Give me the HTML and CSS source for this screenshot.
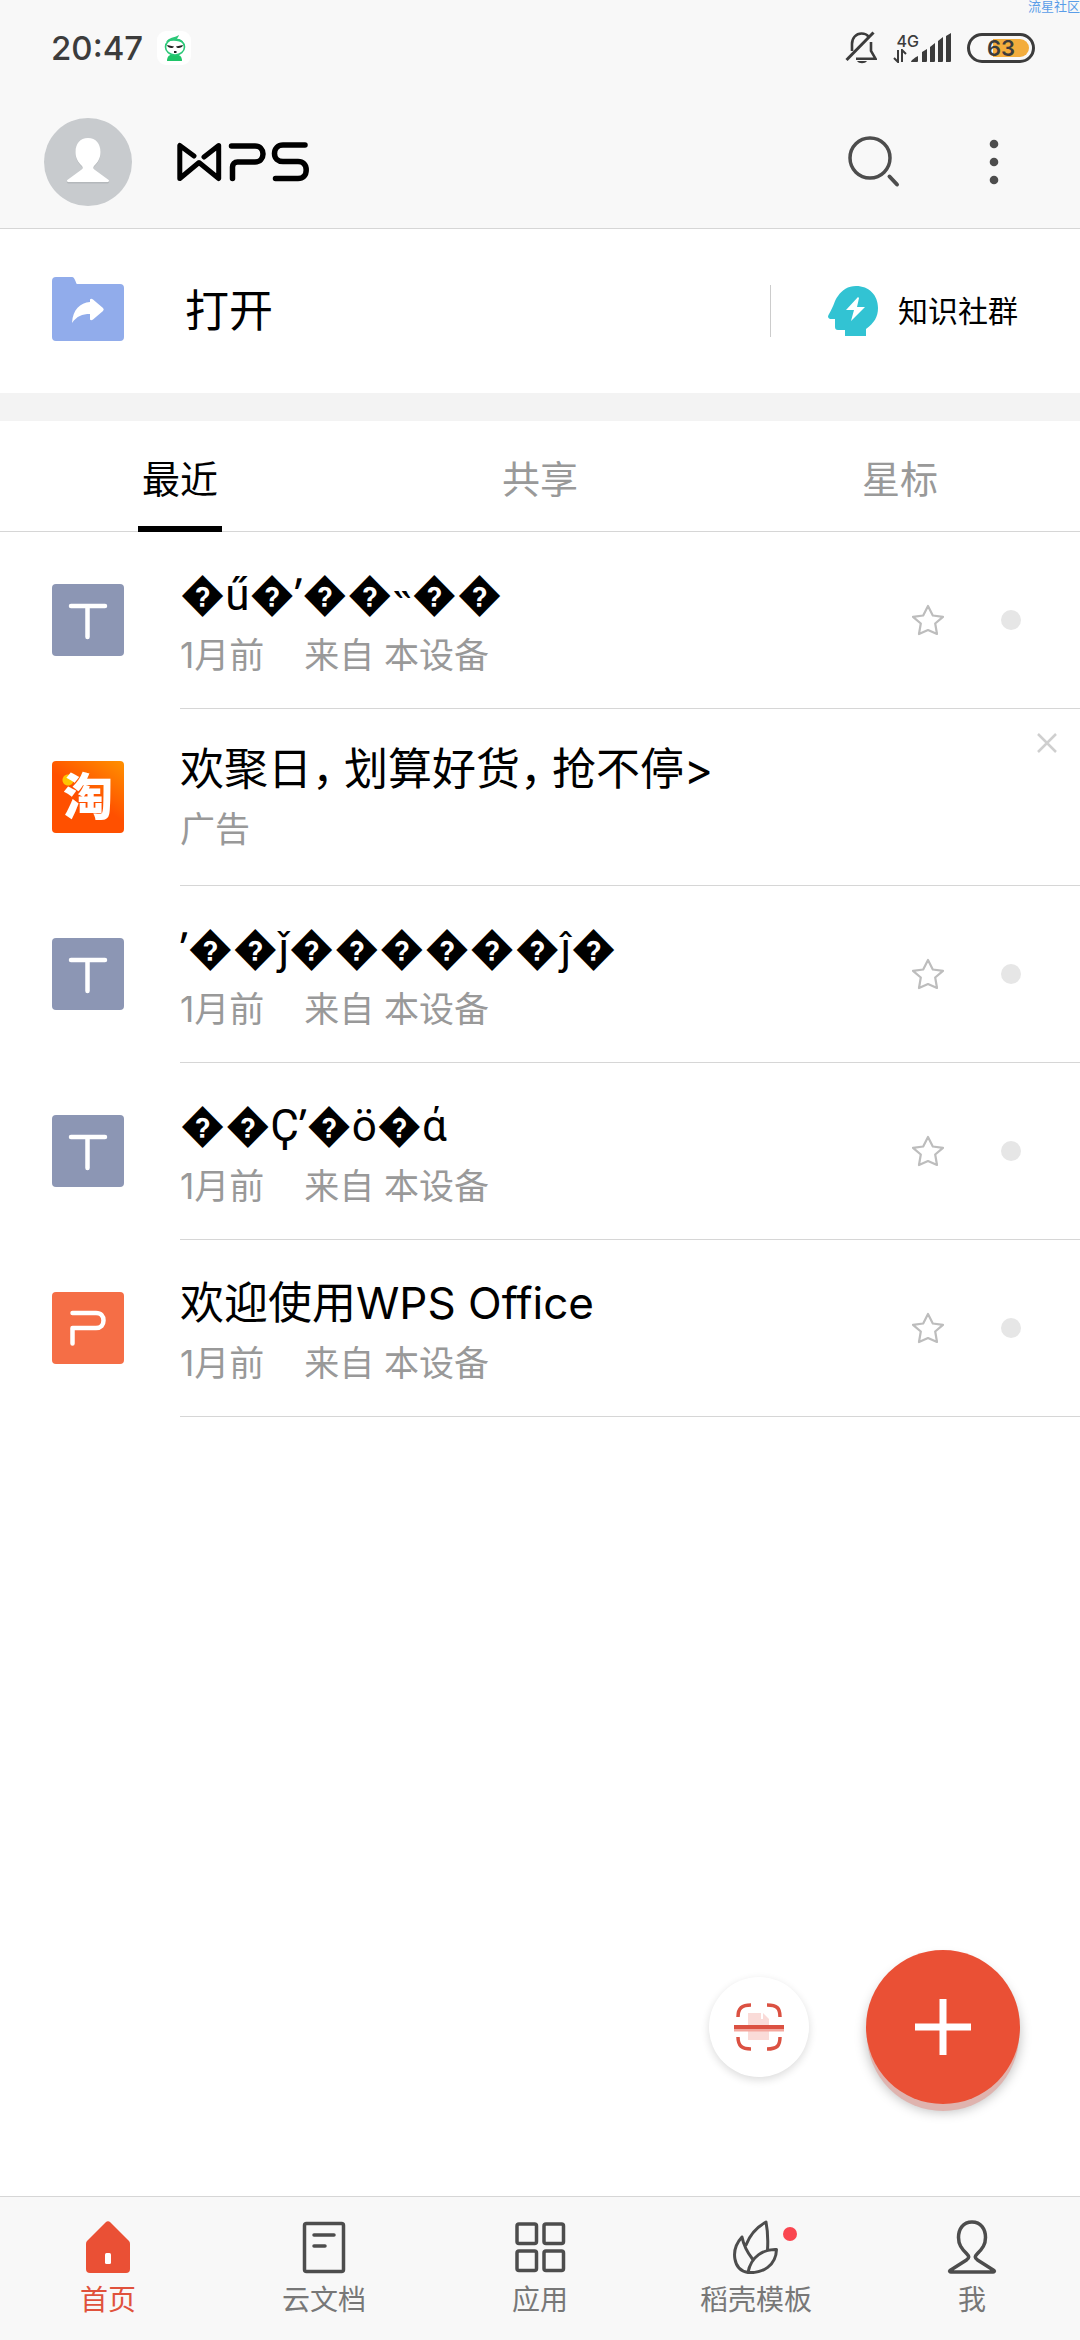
FILE: index.html
```html
<!DOCTYPE html>
<html lang="zh-CN">
<head>
<meta charset="utf-8">
<meta name="viewport" content="width=device-width, initial-scale=1">
<title>WPS Office</title>
<link rel="stylesheet" href="styles.css">
</head>
<body>
<div class="app">
  <div class="status">
    <span class="time">20:47</span>
    <svg class="notice" width="34" height="34" viewBox="0 0 34 34">
      <rect width="34" height="34" rx="9" fill="#fff"/>
      <path d="M10 30c0-4 2-6 4-6h7c2 0 4 2 4 6z" fill="#1fc468"/>
      <ellipse cx="18" cy="16" rx="9.5" ry="8" fill="#fff" stroke="#2bc878" stroke-width="1.6"/>
      <path d="M9 11c3-5 8-4 13-7-1 3-2 3-2 4 4 0 6 2 7 5-5-4-12-4-18-2z" fill="#2bc878"/>
      <path d="M10 14l7 1.500c0 2-6 2.500-7-1.500zM26 14l-7 1.500c0 2 6 2.500 7-1.500zM17 20h2.500v2H17z" fill="#222"/>
    </svg>
    <div class="status-right">
      <svg width="32" height="34" viewBox="0 0 32 34" fill="none" stroke="#3c3c3c" stroke-width="2.600">
        <path d="M7 20v-7c0-6 4-10.500 9.500-10.500 3 0 5.500 1 7 3M26 11v9l4.500 7.700H11"/>
        <path d="M1.500 29L28.500 1.500" stroke-width="3"/>
        <path d="M12 30h10c-2 3-8 3-10 0z" fill="#3c3c3c" stroke="none"/>
      </svg>
      <div class="network">
        <div class="carrier">
          <span>4G</span>
          <svg width="14" height="14" viewBox="0 0 14 14" fill="none" stroke="#3c3c3c" stroke-width="2"><path d="M5 1v12L1 9M9 13V1l4 4"/></svg>
        </div>
        <svg width="40" height="30" viewBox="0 0 40 30" fill="#3c3c3c"><path d="M0 29c0-2 5-5 7-6v5q0 1-1 1zM11 19l5-3v12q0 1-1 1h-4zM19 14l5-4v18q0 1-1 1h-4zM27 8l5-4v24q0 1-1 1h-4zM35 3l5-3v28q0 1-1 1h-4z"/></svg>
      </div>
      <span class="battery"><span class="charge"></span><span class="percent">63</span></span>
    </div>
    <span class="watermark">流星社区</span>
  </div>

  <header class="header">
    <button class="avatar" aria-label="账户">
      <svg width="88" height="88" viewBox="0 0 88 88"><circle cx="44" cy="44" r="44" fill="#c8cbce"/>
      <path d="M44 20c-8 0-12.500 6-12.500 14 0 6 2.500 10 6.500 14 1.500 2 .5 3-1 4L24 61.500c-2 1.500-1 3 1 3h38c2 0 3-1.500 1-3L51 52c-1.500-1-2.500-2-1-4 4-4 6.500-8 6.500-14 0-8-4.500-14-12.500-14z" fill="#b4b8bb" transform="translate(0 1)"/>
      <path d="M44 20c-8 0-12.500 6-12.500 14 0 6 2.500 10 6.500 14 1.500 2 .5 3-1 4L24 61.500c-2 1.500-1 2.500 1 2.500h38c2 0 3-1 1-2.500L51 52c-1.500-1-2.500-2-1-4 4-4 6.500-8 6.500-14 0-8-4.500-14-12.500-14z" fill="#fff"/></svg>
    </button>
    <svg class="logo" role="img" aria-label="WPS" width="132" height="40" viewBox="0 0 132 40" fill="none" stroke="#000" stroke-width="5.500" stroke-linecap="round" stroke-linejoin="round">
      <path d="M17 14L2.800 3.500v33L22 20.500l19.700 16v-33L27 15" stroke-width="5"/>
      <path d="M54.500 4H78c5 0 8 3.500 8 8s-3 8-8 8H60.500c-3 0-5 2-5 5v11.500"/>
      <path d="M128 3H106c-5 0-8.500 3.500-8.500 8.500s3.500 8 8.500 8h15c5 0 8.200 3 8.200 8.500s-3.200 8.500-8.200 8.500H98.500"/>
    </svg>
    <div class="header-actions">
      <button aria-label="搜索">
        <svg width="56" height="56" viewBox="0 0 56 56" fill="none" stroke="#4d4d4d" stroke-width="3.500"><circle cx="24" cy="24" r="20"/><path d="M43.500 42.500l7.500 8" stroke-width="4" stroke-linecap="round"/></svg>
      </button>
      <button aria-label="更多">
        <svg width="56" height="56" viewBox="0 0 56 56" fill="#4d4d4d"><circle cx="28" cy="10" r="4.300"/><circle cx="28" cy="28" r="4.300"/><circle cx="28" cy="46" r="4.300"/></svg>
      </button>
    </div>
  </header>

  <section class="open">
    <button class="open-file">
      <svg width="72" height="68" viewBox="0 0 72 68"><path d="M4 0h16c3 0 4 7 5 7h43q4 0 4 4v49q0 4-4 4H4q-4 0-4-4V4q0-4 4-4z" fill="#91aceb"/><path d="M20 46c1-14 8-20 18-21v-2.500q1-1.500 3 0L51 31q1.500 1.500 0 3L41 42.500q-2 1.500-3 0V37c-8 0-13 2-18 9z" fill="#fff"/></svg>
      打开
    </button>
    <a class="community" href="#community">
      <svg width="50" height="50" viewBox="0 0 50 50"><path d="M28 0c13 0 22 9 22 22 0 9-4 15-12 21v7H17v-6H10q-3 0-3-3v-8H2q-3-1-1.500-4C7 18 6 15 10 10 14 4 20 0 28 0z" fill="#32c3d3"/><path d="M30 11L18 24h8l-3 11 14-14h-8l2-9z" fill="#fff"/></svg>
      知识社群
    </a>
  </section>

  <nav class="tabs">
    <a class="active" href="#recent">最近</a>
    <a href="#shared">共享</a>
    <a href="#starred">星标</a>
  </nav>

  <svg width="0" height="0" class="defs" aria-hidden="true">
    <symbol id="star" viewBox="0 0 32 32"><path d="M16 2l4.800 9.500 10.200 1.300-7.800 6.700 1.800 10.500L16 26l-9 4 1.800-10.500L1 12.800l10.200-1.300z" fill="none" stroke="#bdbdbd" stroke-width="2.200" stroke-linejoin="round"/></symbol>
    <symbol id="text-file" viewBox="0 0 72 72"><rect width="72" height="72" rx="4" fill="#8c96b4"/><path d="M19 22h34M35.500 22v31" fill="none" stroke="#fff" stroke-width="4.500" stroke-linecap="round"/></symbol>
  </svg>

  <main class="files">
    <article class="file">
      <svg class="tile"><use href="#text-file"/></svg>
      <div class="body">
        <div class="text">
          <h2 class="title garbled">&#xFFFD;ű&#xFFFD;ʹ&#xFFFD;&#xFFFD;˵&#xFFFD;&#xFFFD;</h2>
          <p class="meta"><span>1月前</span><span>来自 本设备</span></p>
        </div>
        <button class="star" aria-label="星标"><svg width="32" height="32"><use href="#star"/></svg></button>
        <span class="dot"></span>
      </div>
    </article>
    <article class="file ad">
      <div class="tile taobao"><span>淘</span></div>
      <div class="body">
        <div class="text">
          <h2 class="title">欢聚日<span class="comma">，</span>划算好货<span class="comma">，</span>抢不停&gt;</h2>
          <p class="meta">广告</p>
        </div>
        <button class="close" aria-label="关闭"><svg width="20" height="20" viewBox="0 0 20 20"><path d="M1 1l18 18M19 1L1 19" stroke="#cfcfcf" stroke-width="2.500"/></svg></button>
      </div>
    </article>
    <article class="file">
      <svg class="tile"><use href="#text-file"/></svg>
      <div class="body">
        <div class="text">
          <h2 class="title garbled">ʹ&#xFFFD;&#xFFFD;ǰ&#xFFFD;&#xFFFD;&#xFFFD;&#xFFFD;&#xFFFD;&#xFFFD;ĵ&#xFFFD;</h2>
          <p class="meta"><span>1月前</span><span>来自 本设备</span></p>
        </div>
        <button class="star" aria-label="星标"><svg width="32" height="32"><use href="#star"/></svg></button>
        <span class="dot"></span>
      </div>
    </article>
    <article class="file">
      <svg class="tile"><use href="#text-file"/></svg>
      <div class="body">
        <div class="text">
          <h2 class="title garbled">&#xFFFD;&#xFFFD;Ҫʹ&#xFFFD;ö&#xFFFD;ά</h2>
          <p class="meta"><span>1月前</span><span>来自 本设备</span></p>
        </div>
        <button class="star" aria-label="星标"><svg width="32" height="32"><use href="#star"/></svg></button>
        <span class="dot"></span>
      </div>
    </article>
    <article class="file">
      <svg class="tile" viewBox="0 0 72 72"><rect width="72" height="72" rx="4" fill="#f56e46"/><path d="M20.500 21H44c5 0 7.500 3 7.500 7.500S49 36 44 36H20.500v15.500" fill="none" stroke="#fff" stroke-width="4.500" stroke-linecap="round" stroke-linejoin="round"/></svg>
      <div class="body">
        <div class="text">
          <h2 class="title">欢迎使用WPS Office</h2>
          <p class="meta"><span>1月前</span><span>来自 本设备</span></p>
        </div>
        <button class="star" aria-label="星标"><svg width="32" height="32"><use href="#star"/></svg></button>
        <span class="dot"></span>
      </div>
    </article>
  </main>

  <div class="bottom">
    <div class="floating">
      <button class="scan" aria-label="扫描">
        <svg width="52" height="50" viewBox="0 0 52 50" fill="none" stroke="#db5142" stroke-width="4">
          <path d="M15 11h13v6h8v21H15z" fill="#fadbd8" stroke="none"/><path d="M30 11l6 6h-6z" fill="#fadbd8" stroke="none"/>
          <path d="M1 27h50" stroke="#f4a79e" stroke-width="5"/>
          <path d="M1 25h50"/><path d="M5 15c0-9 4-12 13-12M34 3c10 0 13 3 13 12M5 35c0 9 4 12 13 12M34 47c10 0 13-3 13-12" stroke-width="3.500"/>
        </svg>
      </button>
      <button class="create" aria-label="新建">
        <svg width="58" height="58" viewBox="0 0 58 58"><path d="M1 29h56M29 1v56" stroke="#fff" stroke-width="7"/></svg>
      </button>
    </div>
    <nav class="navbar">
      <a class="active" href="#home">
        <svg width="52" height="54" viewBox="0 0 52 54"><path d="M23.500 2.500q2.500-2.500 5 0L47 21q1 1 1 3v25q0 4-4 4H8q-4 0-4-4V24q0-2 1-3z" fill="#ea5035"/><rect x="23" y="33" width="6" height="11" rx="1.500" fill="#fff"/></svg>
        首页
      </a>
      <a href="#cloud">
        <svg width="52" height="54" viewBox="0 0 52 54" fill="none" stroke="#4d4d4d" stroke-width="3.500"><rect x="6.500" y="3.500" width="39" height="48" rx="2"/><path d="M16 15h20M16 26h11" stroke-linecap="round"/></svg>
        云文档
      </a>
      <a href="#apps">
        <svg width="52" height="54" viewBox="0 0 52 54" fill="none" stroke="#4d4d4d" stroke-width="3.500"><rect x="3" y="4" width="19.500" height="19.500" rx="2"/><rect x="30" y="4" width="19.500" height="19.500" rx="2"/><rect x="3" y="31" width="19.500" height="19.500" rx="2"/><rect x="30" y="31" width="19.500" height="19.500" rx="2"/></svg>
        应用
      </a>
      <a href="#templates">
        <span class="badged">
          <svg width="52" height="54" viewBox="0 0 52 54" fill="none" stroke="#4d4d4d" stroke-width="3" stroke-linejoin="round" stroke-linecap="round"><path d="M16 25C19 17 25 8 36 2c2 10 2 20 1.500 28M22.500 39C17 32 14 27 12 17 0 30 3 50 18 52.500c15 1 28-7 28.500-23C34 29 21 36 18 52.500"/></svg>
          <span class="badge"></span>
        </span>
        稻壳模板
      </a>
      <a href="#me">
        <svg width="52" height="54" viewBox="0 0 52 54" fill="none" stroke="#4d4d4d" stroke-width="3.500" stroke-linejoin="round"><path d="M26 2C17 2 12.500 9 12.500 17.500c0 7 3 11 8 16 3 3 3 4 0 6.500L4 50.500c-1 1 0 1.500 1 1.500h42c1 0 2-.5 1-1.500L31.500 40c-3-2.500-3-3.500 0-6.500 5-5 8-9 8-16C39.500 9 35 2 26 2z"/></svg>
        我
      </a>
    </nav>
  </div>
</div>
</body>
</html>
```
FILE: styles.css
```css
* { box-sizing: border-box; }

body {
  margin: 0;
  background: #fff;
  color: #000;
  font-family: Inter, "Noto Sans CJK SC", sans-serif;
}

h2, p { margin: 0; font-weight: 400; }
a { color: inherit; text-decoration: none; }
svg { display: block; flex: none; }
button {
  padding: 0;
  border: 0;
  background: none;
  color: inherit;
  font: inherit;
}

.app {
  position: relative;
  display: flex;
  flex-direction: column;
  min-height: 100vh;
}

/* status bar */
.status {
  position: relative;
  display: flex;
  align-items: center;
  height: 96px;
  padding: 0 45px 0 51px;
  background: #f8f8f8;
  color: #3c3c3c;
}
.time { font-size: 33px; font-weight: 500; line-height: 40px; }
.notice { margin-left: 14px; }
.status-right {
  display: flex;
  align-items: center;
  gap: 16px;
  margin-left: auto;
}
.network { display: flex; align-items: flex-end; }
.network > svg { margin-left: -8px; }
.carrier { font-size: 16px; font-weight: 500; line-height: 16px; }
.carrier span { padding-left: 4px; }
.battery {
  position: relative;
  display: grid;
  place-items: center;
  width: 68px;
  height: 30px;
  border: 3px solid #3c3c3c;
  border-radius: 15px;
}
.charge {
  position: absolute;
  top: 3px;
  right: 3px;
  bottom: 3px;
  width: 36px;
  border-radius: 0 9px 9px 0;
  background: #f3ad3d;
}
.percent {
  position: relative;
  font-size: 22px;
  font-weight: 600;
  line-height: 24px;
}
.watermark {
  position: absolute;
  top: -2px;
  right: 0;
  color: #5a9de8;
  font-size: 13px;
  line-height: 16px;
  white-space: nowrap;
}

/* title bar */
.header {
  display: flex;
  align-items: center;
  height: 133px;
  padding: 0 58px 0 44px;
  border-bottom: 1px solid #d6d6d6;
  background: #f8f8f8;
}
.logo { margin-left: 45px; }
.header-actions { display: flex; gap: 64px; margin-left: auto; }

/* open row */
.open {
  display: flex;
  align-items: center;
  justify-content: space-between;
  height: 192px;
  padding-left: 52px;
  border-bottom: 28px solid #f3f3f3;
}
.open-file {
  display: flex;
  align-items: center;
  gap: 61px;
  font-size: 44px;
  line-height: 64px;
}
.community {
  display: flex;
  align-items: center;
  gap: 20px;
  padding: 0 62px 0 57px;
  border-left: 1px solid #ccc;
  font-size: 30px;
  line-height: 52px;
}

/* tabs */
.tabs {
  display: grid;
  grid-template-columns: repeat(3, 1fr);
  justify-items: center;
  height: 111px;
  border-bottom: 1px solid #d6d6d6;
  color: #999;
  font-size: 38px;
  line-height: 116px;
}
.tabs a { height: 111px; padding: 0 4px; }
.tabs .active { border-bottom: 6px solid #000; color: #000; }

/* file list */
.defs { position: absolute; }
.file {
  display: flex;
  gap: 56px;
  height: 177px;
  padding-left: 52px;
}
.tile { flex: none; width: 72px; height: 72px; margin-top: 52px; }
.body {
  display: flex;
  flex: 1;
  align-items: center;
  min-width: 0;
  padding-right: 59px;
  border-bottom: 1px solid #d6d6d6;
}
.text { flex: 1; min-width: 0; padding-top: 10px; }
.title { font-size: 44px; line-height: 52px; white-space: nowrap; }
.garbled { font-family: Roboto, "Noto Sans", "DejaVu Sans", sans-serif; }
.comma { margin-right: 10px; font-feature-settings: "halt"; }
.meta {
  display: flex;
  gap: 40px;
  margin-top: 8px;
  color: #999;
  font-size: 35px;
  line-height: 52px;
}
.dot {
  width: 20px;
  height: 20px;
  margin-left: 57px;
  border-radius: 50%;
  background: #e6e6e6;
}
.ad .body { align-items: flex-start; padding: 24px 23px 0 0; }
.taobao {
  display: grid;
  place-items: center;
  border-radius: 4px;
  background:
    radial-gradient(circle at 16px 19px, #ffc400 5px, transparent 6px),
    linear-gradient(215deg, #ff9100, #ff5000 50%);
  color: #fff;
  font-size: 50px;
  font-weight: 900;
  line-height: 72px;
}

/* floating buttons and bottom navigation */
.bottom { position: sticky; bottom: 0; margin-top: auto; }
.floating {
  position: absolute;
  right: 60px;
  bottom: 236px;
  display: flex;
  align-items: center;
  gap: 57px;
}
.floating button { display: grid; place-items: center; border-radius: 50%; }
.scan {
  width: 100px;
  height: 100px;
  background: #fff;
  box-shadow: 0 3px 8px rgba(0, 0, 0, .14);
}
.create {
  width: 154px;
  height: 154px;
  background: #ea5035;
  box-shadow: 0 8px 0 -1px #dfb3ae, 0 8px 12px rgba(0, 0, 0, .25);
}
.navbar {
  display: grid;
  grid-template-columns: repeat(5, 1fr);
  height: 144px;
  padding-top: 23px;
  border-top: 1px solid #d6d6d6;
  background: #f8f8f8;
  color: #777;
  font-size: 28px;
  line-height: 40px;
}
.navbar a {
  display: flex;
  flex-direction: column;
  align-items: center;
  gap: 6px;
}
.navbar .active { color: #e0523c; }
.badged { position: relative; }
.badge {
  position: absolute;
  top: 7px;
  right: -15px;
  width: 14px;
  height: 14px;
  border-radius: 50%;
  background: #fa4650;
}
```
